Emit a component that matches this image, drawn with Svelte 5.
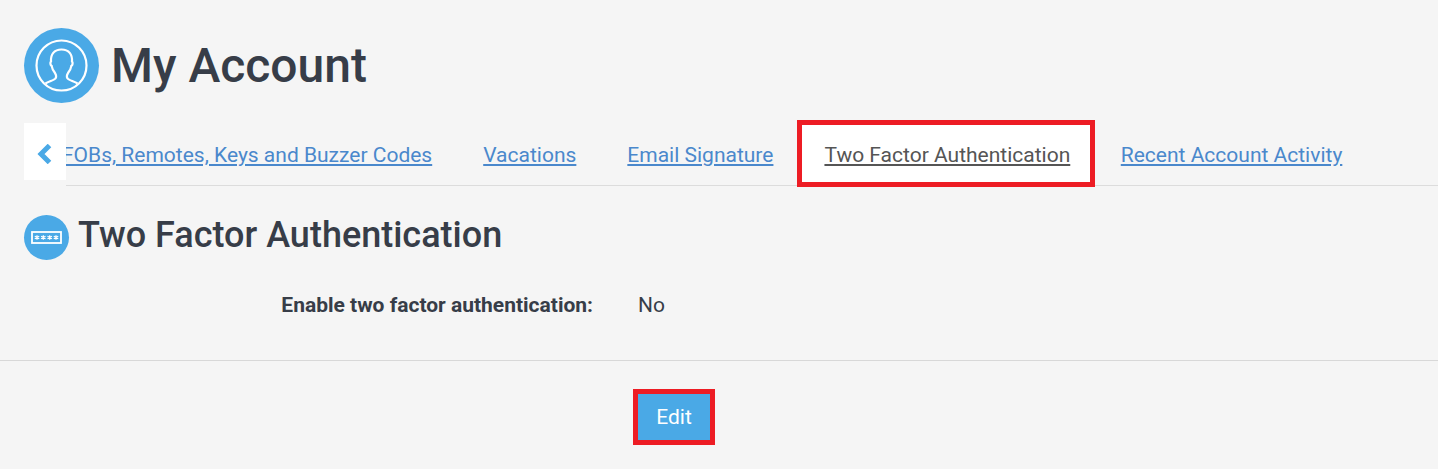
<script>
	let tabs = [
		{ label: 'FOBs, Remotes, Keys and Buzzer Codes' },
		{ label: 'Vacations' },
		{ label: 'Email Signature' },
		{ label: 'Two Factor Authentication', active: true },
		{ label: 'Recent Account Activity' }
	];
	let stars = [13, 19.3, 25.7, 32];
</script>

<main class="page">
	<header class="page-title">
		<span class="avatar">
			<svg viewBox="0 0 75 75" width="75" height="75" fill="none" stroke="#fff" stroke-width="2.2">
				<circle cx="37.5" cy="37.5" r="25" />
				<path d="M21.500 55.500 c3-2 9-3.500 10-5 c1-1.500 1-3-.5-5.500 c-1.500-2-3-4-3.300-7 c-1.500-1-1.700-3.500-.7-4.500 c-.5-7 3-12 10.500-12 c7.500 0 11 5 10.500 12 c1 1 .8 3.500-.7 4.500 c-.3 3-1.800 5-3.300 7 c-1.500 2.500-1.500 4-.5 5.500 c1 1.500 7 3 10 5" />
			</svg>
		</span>
		<h1>My Account</h1>
	</header>

	<div class="tab-row">
		<button class="back" aria-label="Back">
			<svg viewBox="0 0 15 20" width="15" height="20">
				<path d="M12.500 1.500 L4 10 L12.500 18.500" fill="none" stroke="#4aa9e6" stroke-width="5" />
			</svg>
		</button>
		<nav class="tabs">
			<ul>
				{#each tabs as tab}
					<li class:active={tab.active}><a href="#top">{tab.label}</a></li>
				{/each}
			</ul>
		</nav>
	</div>

	<section class="section">
		<div class="section-title">
			<span class="key-icon">
				<svg viewBox="0 0 45 45" width="45" height="45">
					<rect x="8" y="17" width="29" height="11" fill="none" stroke="#fff" stroke-width="1.800" />
					<g stroke="#fff" stroke-width="1.200">
						{#each stars as x}
							<path d="M{x} 20.200 v4.600 M{x - 2.2} 21.200 l4.400 2.600 M{x + 2.2} 21.200 l-4.400 2.600" />
						{/each}
					</g>
				</svg>
			</span>
			<h2>Two Factor Authentication</h2>
		</div>

		<dl class="field">
			<dt>Enable two factor authentication:</dt>
			<dd>No</dd>
		</dl>
	</section>

	<div class="actions">
		<button class="edit">Edit</button>
	</div>
</main>

<style>
	:global(body) {
		background: #f5f5f5;
		font-family: Roboto, 'Liberation Sans', sans-serif;
		color: #373d48;
	}

	.page {
		height: 469px;
		overflow: hidden;
		padding-top: 28px;
		box-sizing: border-box;
	}

	.page-title {
		display: flex;
		align-items: center;
		gap: 12px;
		padding-left: 24px;
		height: 75px;
	}

	.avatar,
	.key-icon {
		display: block;
		border-radius: 50%;
		background: #4aa9e6;
		flex-shrink: 0;
	}

	.avatar {
		width: 75px;
		height: 75px;
	}

	.avatar svg,
	.key-icon svg {
		display: block;
	}

	h1 {
		margin: 0;
		font-size: 48px;
		font-weight: 500;
		line-height: 75px;
	}

	.tab-row {
		display: flex;
		align-items: flex-start;
		margin-top: 17px;
		padding-left: 24px;
	}

	.back {
		flex: 0 0 42px;
		height: 57px;
		margin-top: 3px;
		padding: 0;
		border: 0;
		background: #fff;
		display: flex;
		align-items: center;
		justify-content: center;
	}

	.back svg {
		margin-left: -2px;
		margin-top: 4px;
	}

	.tabs {
		flex: 1;
		overflow: hidden;
		height: 67px;
	}

	.tabs ul {
		display: flex;
		align-items: flex-start;
		list-style: none;
		height: 66px;
		box-sizing: border-box;
		margin: 0 0 0 -29.500px;
		padding: 0;
		border-bottom: 1px solid #dcdcdc;
		min-width: 1500px;
	}

	.tabs li {
		height: 65px;
		padding: 0 25.500px;
		display: flex;
		align-items: center;
		font-size: 21px;
	}

	.tabs a {
		color: #4a88cc;
		text-decoration: underline;
		position: relative;
		top: 2px;
	}

	.tabs li.active {
		height: 67px;
		box-sizing: border-box;
		padding: 0 20px 0 22px;
		margin-left: -1.500px;
		border: 5px solid #ed1c24;
		background: #fff;
		position: relative;
	}

	.tabs li.active a {
		color: #555;
		top: 1px;
	}

	.section {
		padding-top: 28px;
		border-bottom: 1px solid #d8d8d8;
		height: 145px;
	}

	.section-title {
		display: flex;
		align-items: center;
		gap: 9px;
		padding-left: 24px;
		height: 45px;
	}

	.key-icon {
		width: 45px;
		height: 45px;
	}

	h2 {
		margin: -6px 0 0;
		font-size: 36px;
		font-weight: 500;
		line-height: 40px;
	}

	.field {
		display: flex;
		gap: 45px;
		margin: 33px 0 0;
		font-size: 21px;
		line-height: 24px;
	}

	.field dt {
		width: 593px;
		text-align: right;
		font-weight: 700;
	}

	.field dd {
		margin: 0;
	}

	.actions {
		display: flex;
		padding: 28px 0 0 633px;
	}

	.edit {
		width: 82px;
		height: 56px;
		box-sizing: border-box;
		border: 5px solid #ed1c24;
		background: #4aa9e6;
		color: #fff;
		font-family: inherit;
		font-size: 21px;
		padding: 0;
	}
</style>
